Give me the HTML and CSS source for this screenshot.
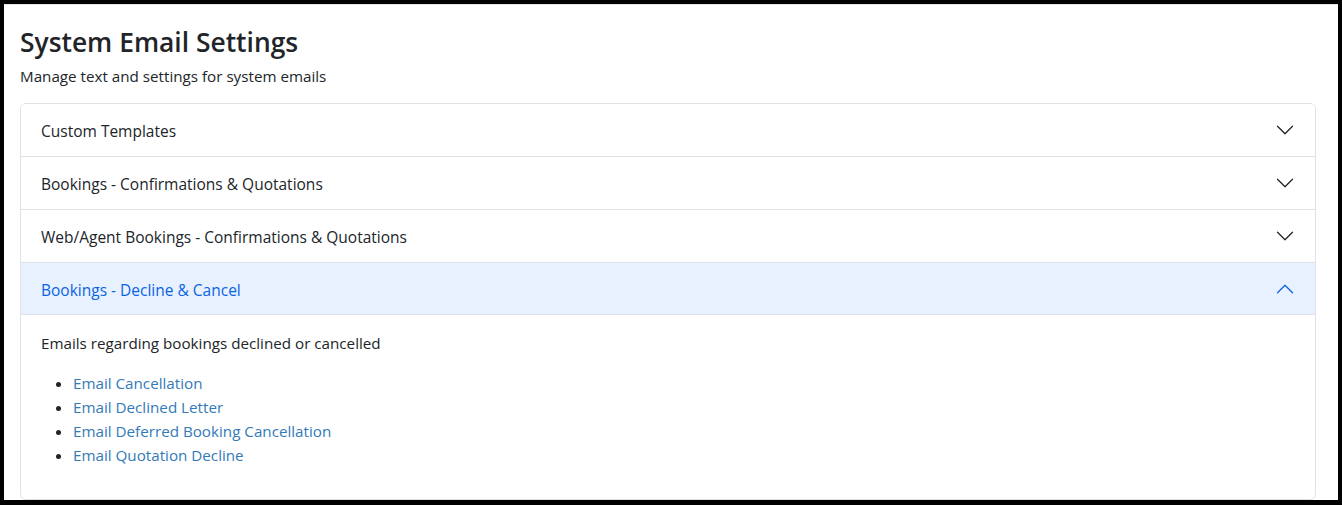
FILE: index.html
```html
<!DOCTYPE html>
<html lang="en">
<head>
  <meta charset="UTF-8">
  <meta name="viewport" content="width=device-width, initial-scale=1.0">
  <title>System Email Settings</title>
  <link rel="stylesheet" href="styles.css">
</head>
<body>
  <div class="frame">
    <div class="page">
      <h3 class="page-title">System Email Settings</h3>
      <p class="page-lead">Manage text and settings for system emails</p>

      <!-- Accordion of email groups, one open -->
      <div class="accordion">
        <div class="acc-item">
          <button class="acc-header" type="button">
            <span>Custom Templates</span>
            <svg class="chevron" viewBox="0 0 16 16"><path d="M1.646 4.646a.5.5 0 0 1 .708 0L8 10.293l5.646-5.647a.5.5 0 0 1 .708.708l-6 6a.5.5 0 0 1-.708 0l-6-6a.5.5 0 0 1 0-.708z"/></svg>
          </button>
        </div>
        <div class="acc-item">
          <button class="acc-header" type="button">
            <span>Bookings - Confirmations &amp; Quotations</span>
            <svg class="chevron" viewBox="0 0 16 16"><path d="M1.646 4.646a.5.5 0 0 1 .708 0L8 10.293l5.646-5.647a.5.5 0 0 1 .708.708l-6 6a.5.5 0 0 1-.708 0l-6-6a.5.5 0 0 1 0-.708z"/></svg>
          </button>
        </div>
        <div class="acc-item">
          <button class="acc-header" type="button">
            <span>Web/Agent Bookings - Confirmations &amp; Quotations</span>
            <svg class="chevron" viewBox="0 0 16 16"><path d="M1.646 4.646a.5.5 0 0 1 .708 0L8 10.293l5.646-5.647a.5.5 0 0 1 .708.708l-6 6a.5.5 0 0 1-.708 0l-6-6a.5.5 0 0 1 0-.708z"/></svg>
          </button>
        </div>
        <div class="acc-item open">
          <button class="acc-header" type="button">
            <span>Bookings - Decline &amp; Cancel</span>
            <svg class="chevron" viewBox="0 0 16 16"><path d="M1.646 4.646a.5.5 0 0 1 .708 0L8 10.293l5.646-5.647a.5.5 0 0 1 .708.708l-6 6a.5.5 0 0 1-.708 0l-6-6a.5.5 0 0 1 0-.708z"/></svg>
          </button>
          <div class="acc-body">
            <p>Emails regarding bookings declined or cancelled</p>
            <ul>
              <li><a href="#">Email Cancellation</a></li>
              <li><a href="#">Email Declined Letter</a></li>
              <li><a href="#">Email Deferred Booking Cancellation</a></li>
              <li><a href="#">Email Quotation Decline</a></li>
            </ul>
          </div>
        </div>
      </div>
    </div>
  </div>
</body>
</html>
```

FILE: styles.css
```css
/* Screenshot frame: black edge round the white page */
html, body {
  margin: 0;
  padding: 0;
  height: 100%;
}
body {
  background: #000;
  font-family: "Open Sans", "Noto Sans", sans-serif;
  font-size: 15.2px;
  line-height: 24px;
  color: #212529;
}
.frame {
  padding: 4px 4px 5px 4px;
  height: 100%;
  box-sizing: border-box;
}
.page {
  height: 100%;
  box-sizing: border-box;
  background: #fff;
  border-top: 1px solid #e4e4e4;
  padding: 0 22px 0 16px;
  overflow: hidden;
}

/* Heading block */
.page-title {
  margin: 0;
  padding-top: 21px;
  font-size: 26.4px;
  font-weight: 600;
  line-height: 32px;
}
.page-lead {
  margin: 6px 0 15px;
}

/* Accordion */
.accordion {
  border: 1px solid #dee2e6;
  border-radius: 6px;
  overflow: hidden;
}
.acc-item + .acc-item {
  border-top: 1px solid #dee2e6;
}
.acc-header {
  display: flex;
  align-items: center;
  justify-content: space-between;
  width: 100%;
  height: 52px;
  padding: 2px 20px 0;
  border: 0;
  background: #fff;
  font: inherit;
  font-size: 15.5px;
  color: #212529;
  text-align: left;
  cursor: pointer;
}
.chevron {
  width: 20px;
  height: 20px;
  margin-top: -2px;
  fill: #212529;
}
.open .acc-header {
  background: #e7f1ff;
  color: #0c63e4;
  border-bottom: 1px solid #dee2e6;
}
.open .chevron {
  fill: #0c63e4;
  transform: rotate(180deg);
}

.acc-body {
  padding: 16px 20px;
}
.acc-body p {
  margin: 0 0 16px;
}
.acc-body ul {
  margin: 0 0 16px;
  padding-left: 32px;
}
.acc-body a {
  color: #337ab7;
  text-decoration: none;
}
```
